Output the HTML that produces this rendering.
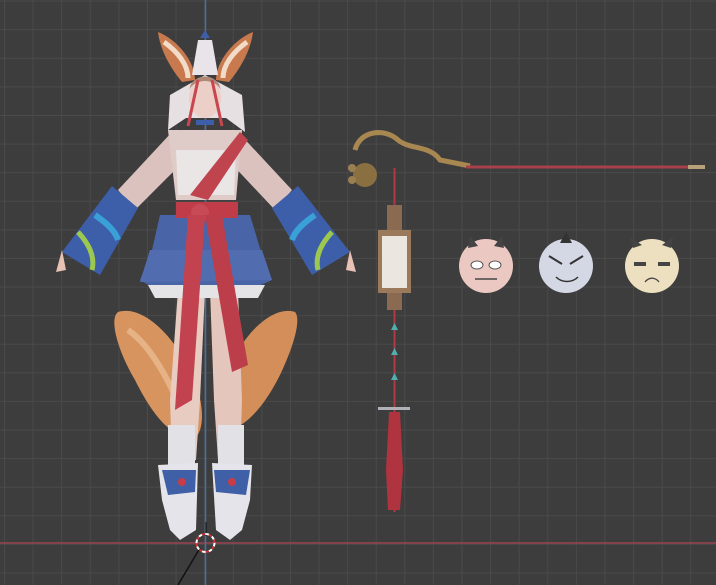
<!DOCTYPE html>
<html><head><style>
html,body{margin:0;padding:0;width:716px;height:585px;overflow:hidden;background:#3d3d3d}
#g{position:absolute;left:0;top:0;width:716px;height:585px;
background-color:#3d3d3d;
background-image:linear-gradient(to right,#4a4a4a 1px,transparent 1px),linear-gradient(to bottom,#4a4a4a 1px,transparent 1px);
background-size:28.6px 28.6px;background-position:4px 0.6px}
svg{position:absolute;left:0;top:0}
</style></head><body><div id="g"></div>
<svg width="716" height="585" viewBox="0 0 716 585">
<line x1="0" y1="543" x2="716" y2="543" stroke="#9a4450" stroke-width="1.5"/>
<line x1="205.5" y1="0" x2="205.5" y2="585" stroke="#4a6ea0" stroke-width="1.5"/>
<path d="M118,312 C140,305 170,330 190,370 C205,400 205,430 195,438 C170,440 150,410 135,380 C120,355 108,320 118,312Z" fill="#d8945f"/>
<path d="M295,312 C275,305 245,330 228,370 C215,400 215,425 222,432 C245,430 265,405 280,375 C292,350 302,320 295,312Z" fill="#d48e5a"/>
<path d="M128,330 C150,345 170,380 185,420" stroke="#f0c8a0" stroke-width="6" fill="none" opacity=".6"/>
<path d="M178,290 L205,290 L200,400 L196,460 L172,460 L170,400Z" fill="#e8ccc2"/>
<path d="M210,290 L238,290 L242,400 L240,460 L218,460 L214,400Z" fill="#e4c6bc"/>
<rect x="168" y="425" width="27" height="45" fill="#e2e2e6"/>
<rect x="218" y="425" width="26" height="45" fill="#e2e2e6"/>
<path d="M158,465 L198,463 L196,530 L180,540 L170,530 L162,500Z" fill="#e4e4ea"/>
<path d="M212,463 L252,465 L250,500 L242,530 L230,540 L216,530Z" fill="#e4e4ea"/>
<path d="M162,470 L196,470 L195,492 L168,495Z" fill="#3f5fa6"/>
<path d="M214,470 L250,470 L246,495 L216,492Z" fill="#3f5fa6"/>
<circle cx="182" cy="482" r="4" fill="#c83c48"/><circle cx="232" cy="482" r="4" fill="#c83c48"/>
<path d="M172,132 L118,190 L135,210 L185,160Z" fill="#dcc2be"/>
<path d="M238,132 L292,190 L275,210 L228,160Z" fill="#dcc2be"/>
<path d="M112,186 L138,208 L100,275 L62,252Z" fill="#3d5ea8"/>
<path d="M298,186 L272,208 L312,275 L350,252Z" fill="#3d5ea8"/>
<path d="M78,232 C90,245 95,258 92,270" stroke="#9cc850" stroke-width="5" fill="none"/>
<path d="M332,232 C320,245 315,258 318,270" stroke="#9cc850" stroke-width="5" fill="none"/>
<path d="M95,215 C105,222 115,230 118,240" stroke="#3aa0d8" stroke-width="6" fill="none"/>
<path d="M315,215 C305,222 295,230 292,240" stroke="#3aa0d8" stroke-width="6" fill="none"/>
<path d="M62,250 L66,270 L56,272Z" fill="#e8c0b4"/>
<path d="M350,250 L346,270 L356,272Z" fill="#e8c0b4"/>
<path d="M168,130 L242,130 L236,200 L176,200Z" fill="#dfccc8"/>
<path d="M176,150 L236,150 L234,195 L178,195Z" fill="#ebe6e6"/>
<path d="M190,195 L240,132 L248,140 L208,200Z" fill="#c0444e"/>
<path d="M160,215 L250,215 L262,255 L272,280 L250,290 L160,292 L140,280 L152,250Z" fill="#4a64a8"/>
<path d="M150,250 L262,250 L272,280 L140,282Z" fill="#526cb0"/>
<path d="M148,285 L265,285 L258,298 L155,298Z" fill="#e4e4e6"/>
<path d="M176,202 L238,202 L238,218 L176,218Z" fill="#c03c48"/>
<circle cx="200" cy="213" r="9" fill="#c84a56"/>
<path d="M188,215 L205,215 L192,400 L175,410Z" fill="#c24250"/>
<path d="M205,215 L222,215 L248,365 L232,372Z" fill="#bc3e4a"/>
<path d="M170,95 L205,75 L242,95 L245,132 L226,118 L186,118 L168,130Z" fill="#e6e0e2"/>
<path d="M158,32 C178,40 195,62 195,80 L182,82 C168,65 160,48 158,32Z" fill="#c87a4e"/>
<path d="M253,32 C233,40 216,62 216,80 L229,82 C243,65 251,48 253,32Z" fill="#c87a4e"/>
<path d="M164,42 C178,52 188,65 188,78" stroke="#f2dcc8" stroke-width="5" fill="none"/>
<path d="M247,42 C233,52 223,65 223,78" stroke="#f2dcc8" stroke-width="5" fill="none"/>
<path d="M198,40 L212,40 L218,75 L192,75Z" fill="#e8e4ea"/>
<path d="M200,38 L210,38 L205,30Z" fill="#3d5ea8"/>
<ellipse cx="205" cy="98" rx="16" ry="20" fill="#eccfc6"/>
<path d="M189,90 C195,78 215,78 221,90 L219,84 C212,74 198,74 191,84Z" fill="#b08878"/>
<path d="M198,80 L188,126 M212,80 L222,126" stroke="#c84650" stroke-width="3"/>
<rect x="196" y="120" width="18" height="5" fill="#3d5ea8"/>
<path d="M355,150 C360,130 385,128 398,140 C410,150 430,145 440,160 L470,166" stroke="#a88850" stroke-width="5" fill="none"/>
<circle cx="365" cy="175" r="12" fill="#8a7040"/>
<circle cx="352" cy="168" r="4" fill="#9a8050"/><circle cx="352" cy="180" r="4" fill="#9a8050"/>
<line x1="466" y1="167" x2="688" y2="167" stroke="#a8404a" stroke-width="3"/>
<line x1="688" y1="167" x2="705" y2="167" stroke="#b8a078" stroke-width="4"/>
<line x1="394.5" y1="168" x2="394.5" y2="512" stroke="#b03a44" stroke-width="2"/>
<rect x="387" y="205" width="15" height="25" fill="#8a6a50"/>
<rect x="378" y="230" width="33" height="63" fill="#9a7a5a"/>
<rect x="382" y="236" width="25" height="52" fill="#ece6e0"/>
<rect x="387" y="293" width="15" height="17" fill="#8a6a50"/>
<path d="M391,330 L398,330 L394.5,323Z M391,355 L398,355 L394.5,348Z M391,380 L398,380 L394.5,373Z" fill="#50b0b0"/>
<rect x="378" y="407" width="32" height="3" fill="#b0b0b8"/>
<path d="M389,412 L400,412 L403,470 L400,510 L388,510 L386,470Z" fill="#b03440"/>
<circle cx="486" cy="266" r="27" fill="#ecc8c2"/>
<circle cx="566" cy="266" r="27" fill="#d4d8e4"/>
<circle cx="652" cy="266" r="27" fill="#ece0c0"/>
<path d="M468,248 L470,236 L478,246Z M494,246 L502,236 L504,248Z" fill="#444"/>
<path d="M560,243 L566,232 L572,243Z" fill="#333"/>
<path d="M633,248 L630,237 L642,245Z M662,245 L673,237 L671,248Z" fill="#444"/>
<ellipse cx="477" cy="265" rx="6" ry="4" fill="#fff" stroke="#555"/><ellipse cx="495" cy="265" rx="6" ry="4" fill="#fff" stroke="#555"/>
<line x1="475" y1="279" x2="497" y2="279" stroke="#444" stroke-width="1.5"/>
<path d="M549,256 L562,264 M583,256 L570,264" stroke="#333" stroke-width="2"/>
<path d="M556,277 C562,283 572,283 578,277" stroke="#333" stroke-width="1.5" fill="none"/>
<path d="M634,264 L646,264 M658,264 L670,264" stroke="#444" stroke-width="4"/>
<path d="M645,282 C650,276 656,278 659,282" stroke="#444" stroke-width="1.3" fill="none"/>
<line x1="178" y1="585" x2="200" y2="548" stroke="#111" stroke-width="1.5"/>
<line x1="206" y1="522" x2="206" y2="536" stroke="#111"/>
<circle cx="205.5" cy="543" r="9" fill="none" stroke="#fff" stroke-width="2" stroke-dasharray="4 3"/>
<circle cx="205.5" cy="543" r="9" fill="none" stroke="#d03030" stroke-width="2" stroke-dasharray="3 4" stroke-dashoffset="3.5"/>
</svg></body></html>
